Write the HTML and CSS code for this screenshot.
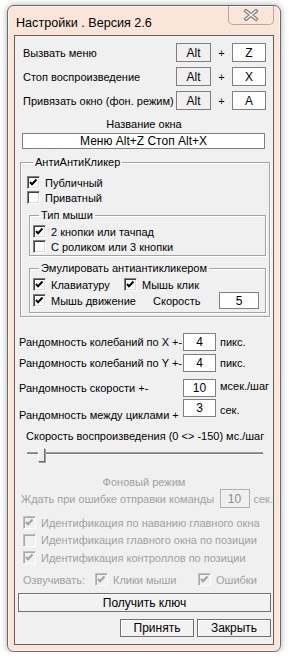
FILE: index.html
```html
<!DOCTYPE html>
<html lang="ru">
  <head>
    <meta charset="UTF-8" />
    <meta name="viewport" content="width=device-width, initial-scale=1.0" />
    <title>Настройки</title>
    <link rel="stylesheet" href="styles.css">
  </head>
  <body>
    <div class="window">
      <div class="titlebar">
        <span class="title">Настройки . Версия 2.6</span>
        <span class="close">
          <svg width="16" height="12" viewBox="0 0 16 12">
            <path d="M3 2 L13 10 M13 2 L3 10" stroke="#767676" stroke-width="3.6" stroke-linecap="square" />
            <path d="M3 2 L13 10 M13 2 L3 10" stroke="#f2f2f2" stroke-width="1.6" stroke-linecap="square" />
          </svg>
        </span>
      </div>

      <div class="client">
        <!-- горячие клавиши -->
        <div class="hotkey">
          <span class="hk-label">Вызвать меню</span>
          <span class="box box-alt">Alt</span>
          <span class="plus">+</span>
          <span class="box box-key">Z</span>
        </div>
        <div class="hotkey">
          <span class="hk-label">Стоп воспроизведение</span>
          <span class="box box-alt">Alt</span>
          <span class="plus">+</span>
          <span class="box box-key">X</span>
        </div>
        <div class="hotkey">
          <span class="hk-label">Привязать окно (фон. режим)</span>
          <span class="box box-alt">Alt</span>
          <span class="plus">+</span>
          <span class="box box-key">A</span>
        </div>

        <div class="caption">Название окна</div>
        <div class="box wintitle">Меню Alt+Z Стоп Alt+X</div>

        <fieldset class="group group-main">
          <legend>АнтиАнтиКликер</legend>
          <div class="check-row"><span class="chk on"></span>Публичный</div>
          <div class="check-row"><span class="chk"></span>Приватный</div>

          <fieldset class="group group-inner group-mouse">
            <legend>Тип мыши</legend>
            <div class="check-row"><span class="chk on"></span>2 кнопки или тачпад</div>
            <div class="check-row"><span class="chk"></span>С роликом или 3 кнопки</div>
          </fieldset>

          <fieldset class="group group-inner group-emul">
            <legend>Эмулировать антиантикликером</legend>
            <div class="check-row">
              <span class="chk on"></span><span class="emul-a">Клавиатуру</span>
              <span class="chk on"></span>Мышь клик
            </div>
            <div class="check-row emul-row2">
              <span class="chk on"></span><span class="emul-b">Мышь движение</span>
              <span class="speed-label">Скорость</span>
              <span class="box box-speed">5</span>
            </div>
          </fieldset>
        </fieldset>

        <div class="rand rand-1">
          <span class="rand-label">Рандомность колебаний по X +-</span>
          <span class="box box-num">4</span>
          <span class="rand-unit">пикс.</span>
        </div>
        <div class="rand rand-2">
          <span class="rand-label">Рандомность колебаний по Y +-</span>
          <span class="box box-num">4</span>
          <span class="rand-unit">пикс.</span>
        </div>
        <div class="rand rand-3">
          <span class="rand-label">Рандомность скорости +-</span>
          <span class="box box-num">10</span>
          <span class="rand-unit">мсек./шаг</span>
        </div>
        <div class="rand rand-4">
          <span class="rand-label">Рандомность между циклами +</span>
          <span class="box box-num">3</span>
          <span class="rand-unit">сек.</span>
        </div>

        <div class="speed-caption">Скорость воспроизведения (0 &lt;&gt; -150) мс./шаг</div>
        <div class="slider">
          <div class="track"></div>
          <div class="thumb"></div>
        </div>

        <div class="caption disabled bg-caption">Фоновый режим</div>
        <div class="wait-row disabled">
          <span class="wait-label">Ждать при ошибке отправки команды</span>
          <span class="box box-off">10</span>
          <span>сек.</span>
        </div>

        <div class="ident disabled">
          <div class="check-row"><span class="chk on off"></span>Идентификация по наванию главного окна</div>
          <div class="check-row"><span class="chk off"></span>Идентификация главного окна по позиции</div>
          <div class="check-row"><span class="chk on off"></span>Идентификация контроллов по позиции</div>
        </div>

        <div class="check-row sound disabled">
          <span class="sound-label">Озвучивать:</span>
          <span class="chk on off"></span><span class="sound-a">Клики мыши</span>
          <span class="chk on off"></span>Ошибки
        </div>

        <div class="btn btn-key">Получить ключ</div>
        <div class="btn-row">
          <div class="btn btn-small">Принять</div>
          <div class="btn btn-small">Закрыть</div>
        </div>
      </div>
    </div>
  </body>
</html>
```

FILE: styles.css
```css
body {
  margin: 0;
  background-color: #fff;
  font-family: 'Liberation Sans', Arial, sans-serif;
  font-size: 11px;
  color: #000;
}
.window {
  margin: 5px 0 0 7px;
  width: 274px;
  box-sizing: border-box;
  border: 1px solid #6a6a6a;
  border-radius: 7px;
  background-color: #fbe5d9;
  padding: 0 6px 6px;
  box-shadow: 0 0 6px rgba(0, 0, 0, 0.35), inset 0 0 0 1px #fff6f1;
}
.titlebar {
  height: 29px;
  display: flex;
  align-items: flex-start;
}
.title {
  font-size: 12.6px;
  margin: 10px 0 0 2px;
  flex: 1;
}
.close {
  width: 46px;
  height: 19px;
  box-sizing: border-box;
  border: 1px solid #b9a69c;
  border-top: none;
  border-radius: 0 0 5px 5px;
  display: flex;
  align-items: center;
  justify-content: center;
}
.client {
  background-color: #f0f0f0;
  border: 1px solid #5f5f5f;
  height: 610px;
  box-sizing: border-box;
  padding-top: 7px;
  display: flex;
  flex-direction: column;
}

/* поля */
.box {
  box-sizing: border-box;
  border: 1px solid #7f7f7f;
  background-color: #fff;
  display: flex;
  align-items: center;
  justify-content: center;
  font-size: 12px;
}

.hotkey {
  height: 19px;
  display: flex;
  align-items: center;
  padding: 0 7px 0 8px;
  margin-bottom: 5px;
}
.hk-label {
  flex: 1;
}
.box-alt {
  width: 35px;
  height: 19px;
  background-color: #f0f0f0;
}
.plus {
  width: 21px;
  text-align: center;
}
.box-key {
  width: 34px;
  height: 19px;
}
.caption {
  text-align: center;
  line-height: 14px;
  margin-top: 2px;
}
.wintitle {
  height: 16px;
  margin: 2px 8px 0 7px;
}

/* группы */
.group {
  margin: 0;
  padding: 0;
  border: 1px solid #a3a3a3;
  box-shadow: inset 1px 1px 0 #fff, 1px 1px 0 #fff;
  min-width: 0;
}
.group legend {
  padding: 0 2px;
  margin-left: 6px;
  line-height: 14px;
}
.group-main {
  margin: 6px 3px 0 5px;
  padding: 6px 3px 3px 6px;
}
.group-inner {
  margin: 0 0 0 2px;
  padding: 2px 0 1px 3px;
}
.group-mouse {
  margin-top: 3px;
}
.group-emul {
  margin-top: 5px;
  padding-bottom: 3px;
}
.check-row {
  display: flex;
  align-items: center;
  height: 15px;
  white-space: nowrap;
}
.chk {
  width: 13px;
  height: 13px;
  box-sizing: border-box;
  border: 1px solid;
  border-color: #808080 #fff #fff #808080;
  box-shadow: inset 1px 1px 0 #404040, inset -1px -1px 0 #dcdcdc;
  background-color: #fff;
  margin-right: 5px;
  flex: none;
}
.chk.on {
  background-image: url("data:image/svg+xml,%3Csvg xmlns='http://www.w3.org/2000/svg' width='11' height='11'%3E%3Cpath d='M2 5 L4 7.3 L8.5 2.5' fill='none' stroke='%23000' stroke-width='2'/%3E%3C/svg%3E");
  background-position: center;
  background-repeat: no-repeat;
}
.chk.off {
  background-color: #f0f0f0;
  border-color: #c0c0c0 #fff #fff #c0c0c0;
  box-shadow: inset 1px 1px 0 #a8a8a8;
}
.chk.on.off {
  background-image: url("data:image/svg+xml,%3Csvg xmlns='http://www.w3.org/2000/svg' width='11' height='11'%3E%3Cpath d='M2 5 L4 7.3 L8.5 2.5' fill='none' stroke='%23a0a0a0' stroke-width='2'/%3E%3C/svg%3E");
}
.emul-a {
  width: 73px;
}
.emul-row2 {
  height: 17px;
}
.emul-b {
  width: 102px;
}
.speed-label {
  width: 66px;
}
.box-speed {
  width: 40px;
  height: 17px;
}

/* рандомность */
.rand {
  display: flex;
  align-items: flex-start;
  padding-left: 4px;
}
.rand-label {
  width: 164px;
  line-height: 14px;
}
.box-num {
  width: 33px;
  height: 18px;
}
.rand-unit {
  margin-left: 4px;
  line-height: 14px;
}
.rand-1 {
  margin-top: 16px;
}
.rand-1 .rand-label,
.rand-2 .rand-label,
.rand-1 .rand-unit,
.rand-2 .rand-unit {
  margin-top: 2px;
}
.rand-2 {
  margin-top: 3px;
}
.rand-3 {
  margin-top: 7px;
}
.rand-3 .rand-label {
  margin-top: 2px;
}
.rand-4 {
  margin-top: 2px;
}
.rand-4 .rand-label {
  margin-top: 9px;
}
.rand-4 .rand-unit {
  margin-top: 4px;
}

.speed-caption {
  line-height: 14px;
  margin: 7px 0 0 11px;
}
.slider {
  position: relative;
  height: 16px;
  margin: 5px 10px 0 12px;
}
.track {
  margin-top: 4px;
  height: 1px;
  border-top: 1px solid #a0a0a0;
  border-bottom: 1px solid #fff;
  background-color: #7a7a7a;
}
.thumb {
  position: absolute;
  left: 11px;
  top: 0;
  width: 7px;
  height: 14px;
  box-sizing: border-box;
  background-color: #ececec;
  border: 1px solid;
  border-color: #fff #6a6a6a #6a6a6a #fff;
  box-shadow: 1px 1px 0 #a0a0a0;
}

/* фоновый режим */
.disabled {
  color: #a0a0a0;
}
.bg-caption {
  margin-top: 11px;
}
.wait-row {
  display: flex;
  align-items: center;
  padding-left: 6px;
}
.wait-label {
  width: 199px;
  white-space: nowrap;
}
.box-off {
  width: 30px;
  height: 19px;
  background-color: #f0f0f0;
  border-color: #b0b0b0;
  color: #8a8a8a;
  margin-right: 4px;
}
.ident {
  margin: 7px 0 0 8px;
  display: flex;
  flex-direction: column;
  gap: 2.5px;
}
.sound {
  margin: 7px 0 0 8px;
}
.sound-label {
  width: 72px;
}
.sound-a {
  width: 85px;
}

/* кнопки */
.btn {
  box-sizing: border-box;
  border: 1px solid #707070;
  background-color: #f2f2f2;
  box-shadow: inset 1px 1px 0 #fff;
  display: flex;
  align-items: center;
  justify-content: center;
  font-size: 12px;
}
.btn-key {
  height: 19px;
  margin: 6px 2px 0 3px;
}
.btn-row {
  display: flex;
  justify-content: flex-end;
  gap: 3px;
  margin: 7px 2px 0 0;
}
.btn-small {
  width: 74px;
  height: 18px;
}
```
